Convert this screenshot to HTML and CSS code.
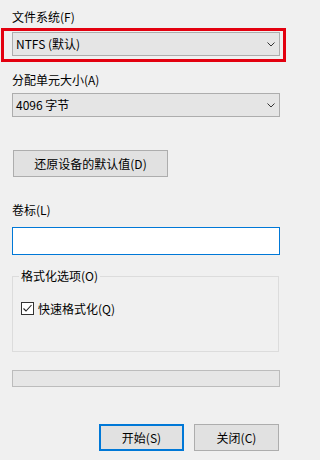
FILE: index.html
```html
<!DOCTYPE html>
<html lang="zh-CN">
<head>
<meta charset="utf-8">
<title>格式化</title>
<link rel="stylesheet" href="styles.css">
</head>
<body>
<div class="dlg">
  <div class="lbl l1">文件系统(F)</div>
  <div class="hl">
    <div class="combo">
      <span>NTFS (默认)</span>
      <svg class="chev" width="8" height="5" viewBox="0 0 8 5"><polyline points="0.5,0.5 4,4 7.5,0.5" fill="none" stroke="#333" stroke-width="1"/></svg>
    </div>
  </div>
  <div class="lbl l2">分配单元大小(A)</div>
  <div class="combo c2">
    <span>4096 字节</span>
    <svg class="chev" width="8" height="5" viewBox="0 0 8 5"><polyline points="0.5,0.5 4,4 7.5,0.5" fill="none" stroke="#333" stroke-width="1"/></svg>
  </div>
  <button class="btn restore">还原设备的默认值(D)</button>
  <div class="lbl l3">卷标(L)</div>
  <div class="input"></div>
  <fieldset class="group">
    <legend>格式化选项(O)</legend>
    <label class="chk">
      <span class="box"><svg width="11" height="11" viewBox="0 0 11 11"><polyline points="1.5,5.5 4,8 9.5,2" fill="none" stroke="#222" stroke-width="1.1"/></svg></span>
      <span>快速格式化(Q)</span>
    </label>
  </fieldset>
  <div class="progress"></div>
  <div class="actions">
    <button class="btn primary">开始(S)</button>
    <button class="btn">关闭(C)</button>
  </div>
</div>
</body>
</html>
```

FILE: styles.css
```css
html, body {
  margin: 0;
  padding: 0;
  background: #f0f0f0;
}
body {
  font-family: "Noto Sans CJK SC", "Noto Sans", sans-serif;
  font-size: 12px;
  color: #000;
}
.dlg {
  width: 268px;
  padding: 9px 0 0 12px;
  display: flex;
  flex-direction: column;
}
.lbl {
  line-height: 16px;
  height: 16px;
}
.l2 { margin-top: 16px; }
.l3 { margin-top: 25px; }
.hl {
  position: relative;
  margin-top: 7px;
}
.hl::after {
  content: "";
  position: absolute;
  left: -11px;
  top: -4px;
  right: -6px;
  bottom: -6px;
  border: 3px solid #e3000f;
  pointer-events: none;
}
.combo {
  box-sizing: border-box;
  height: 24px;
  background: #e5e5e5;
  border: 1px solid #adadad;
  display: flex;
  align-items: center;
  justify-content: space-between;
  padding: 0 4px 0 3px;
  line-height: 22px;
}
.combo .chev { margin-right: 0; }
.c2 { margin-top: 5px; }
.btn {
  box-sizing: border-box;
  font: inherit;
  color: #000;
  background: #e1e1e1;
  border: 1px solid #adadad;
  height: 27px;
  padding: 0;
  margin: 0;
  line-height: 25px;
}
.restore {
  width: 155px;
  margin: 33px 0 0 1px;
  align-self: flex-start;
}
.input {
  box-sizing: border-box;
  height: 28px;
  margin-top: 9px;
  background: #fff;
  border: 1px solid #0078d7;
}
.group {
  margin: 13px 1px 0 0;
  padding: 0 8px 35px 8px;
  border: 1px solid #dcdcdc;
  border-top-color: #dcdcdc;
  min-width: 0;
}
.group legend {
  padding: 0 2px;
  margin-left: -2px;
  line-height: 16px;
  color: #000;
}
.chk {
  display: flex;
  align-items: center;
  height: 16px;
  margin-top: 16px;
  gap: 4px;
}
.box {
  box-sizing: border-box;
  width: 13px;
  height: 13px;
  border: 1px solid #333;
  background: #fff;
  display: flex;
  align-items: center;
  justify-content: center;
}
.progress {
  box-sizing: border-box;
  height: 17px;
  margin-top: 18px;
  background: #e6e6e6;
  border: 1px solid #bcbcbc;
}
.actions {
  display: flex;
  justify-content: flex-end;
  gap: 10px;
  margin: 37px 1px 0 0;
}
.actions .btn { width: 85px; height: 27px; }
.primary {
  border: 2px solid #0078d7;
  line-height: 23px;
}
```
